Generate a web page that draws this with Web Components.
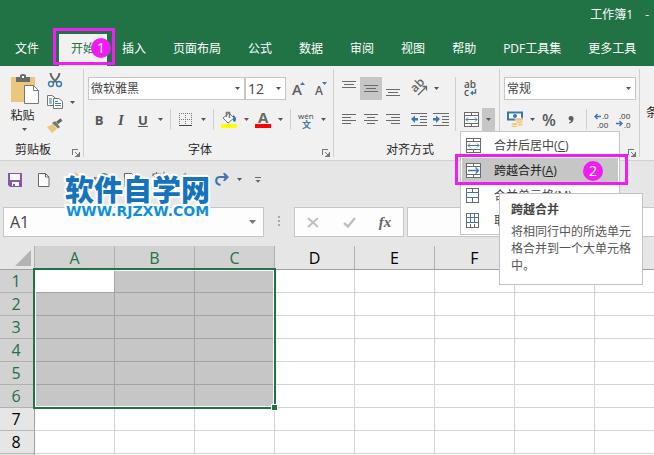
<!DOCTYPE html>
<html lang="zh-CN">
<head>
<meta charset="utf-8">
<title>工作簿1</title>
<style>
html,body{margin:0;height:100%}
body{overflow:hidden;background:#fff;font:12px/16px "Open Sans","Noto Sans CJK SC",sans-serif;color:#262626}
</style>
</head>
<body>
<excel-app></excel-app>
<script>
const line=(d,c='#6a6a6a')=>`<path d="${d}" fill="none" stroke="${c}" shape-rendering="crispEdges"/>`;
const frame='M.5 .5H14.5V14.5H.5ZM.5 3.5H14.5M.5 11.5H14.5';
const ICONS={
 arrow:[5,3,'<path d="M0 0H5L2.5 3Z" fill="#555"/>'],
 bigarrow:[7,4,'<path d="M0 0H7L3.5 4Z" fill="#777"/>'],
 launcher:[8,8,line('M.5 6V.5H6M3 3.5h1M7.5 3V7.5H3','#777')+'<path d="M3 3L6.5 6.5" stroke="#777"/><path d="M7 4V7H4Z" fill="#777"/>'],
 paste:[29,30,'<path d="M0 3H24V28H0Z" fill="#edc67d"/><path d="M5 3H9V1Q12 -1 15 1V3H19V8H5Z" fill="#6b6b6b"/><rect x="11" y="2" width="2" height="2" fill="#fff"/><path d="M13.500 11.500H22.500L27.500 16.500V29.500H13.500Z" fill="#fff" stroke="#777"/><path d="M22.500 11.500V16.500H27.500" fill="none" stroke="#777"/>'],
 cut:[16,16,'<path d="M3.500 1Q4 6 10 10.500M12.500 1Q12 6 6 10.500" fill="none" stroke="#666" stroke-width="2"/><circle cx="4" cy="12" r="2.500" fill="none" stroke="#3a78b5" stroke-width="1.400"/><circle cx="12" cy="12" r="2.500" fill="none" stroke="#3a78b5" stroke-width="1.400"/>'],
 copy:[16,15,'<path d="M.5 .5H5L8.500 3V10.500H.5Z" fill="#fff" stroke="#777"/><path d="M2 4h3M2 6h3M2 8h3" stroke="#3a78b5"/><path d="M6.500 3.500H12L15.500 6.500V13.500H6.500Z" fill="#fff" stroke="#777"/><path d="M8 6.500h3M8 8.500h6M8 10.500h6" stroke="#3a78b5"/>'],
 brush:[16,15,'<path d="M0 9L6 6L10 11L5 15Z" fill="#edc67d"/><path d="M5 5L8 3L13 9L11 10.500Z" fill="#777"/><path d="M10 5L14.500 1.500" stroke="#666" stroke-width="3"/>'],
 grow:[15,15,'<text x="0" y="14" font-family="Open Sans" font-weight="600" font-size="15" fill="#5f5f5f">A</text><path d="M8 4L10.500 1L13 4Z" fill="#3a78b5"/>'],
 shrink:[13,15,'<text x="0" y="14" font-family="Open Sans" font-weight="600" font-size="12" fill="#5f5f5f">A</text><path d="M7 1H12L9.500 4Z" fill="#3a78b5"/>'],
 borders:[14,14,'<path d="M.5 0V12M6.500 0V12M12.500 0V12M0 .5H13M0 6.500H13" stroke="#777" stroke-dasharray="1 1" shape-rendering="crispEdges"/><path d="M0 12.500H13" stroke="#444" shape-rendering="crispEdges"/>'],
 fill:[16,17,'<path d="M2 7L8 2L13 7L7 12Z" fill="#fff" stroke="#777"/><path d="M5.500 6V1.500H8.500V7" fill="none" stroke="#777" stroke-width="1.500"/><path d="M12 4Q17 7 14 11L12 10Z" fill="#3a78b5"/><path d="M0 13H16V17H0Z" fill="#ff0"/>'],
 color:[16,17,'<text x="3" y="12" font-family="Open Sans" font-weight="700" font-size="15" fill="#686868">A</text><path d="M0 13H16V17H0Z" fill="red"/>'],
 wen:[16,18,'<text x="0" y="8" font-family="Open Sans" font-size="8" fill="#444">wén</text><text x="4" y="17" font-family="Noto Sans CJK SC" font-weight="700" font-size="9" fill="#3a78b5">文</text>'],
 top:[14,15,line('M0 .5H14M2 3.500H12M0 6.500H14')],
 middle:[14,8,line('M0 .5H14M2 3.500H12M0 6.500H14')],
 bottom:[14,15,line('M0 8.500H14M2 11.500H12M0 14.500H14')],
 left:[14,11,line('M0 .5H14M0 3.500H9M0 6.500H14M0 9.500H9')],
 center:[14,11,line('M0 .5H14M3 3.500H11M0 6.500H14M3 9.500H11')],
 right:[14,11,line('M0 .5H14M5 3.500H14M0 6.500H14M5 9.500H14')],
 outdent:[16,13,line('M0 .5H16M9 3.500H16M9 6.500H16M9 9.500H16M0 12.500H16')+'<path d="M0 6L4 2.500V5H7V7.500H4V10Z" fill="#3a78b5"/>'],
 indent:[16,13,line('M0 .5H16M9 3.500H16M9 6.500H16M9 9.500H16M0 12.500H16')+'<path d="M7 6L3 2.500V5H0V7.500H3V10Z" fill="#3a78b5"/>'],
 orient:[17,17,'<text transform="translate(4 13) rotate(-45)" font-family="Open Sans" font-weight="600" font-size="12" fill="#666">ab</text><path d="M7 15L15 7M11.500 6.500H15.500V10.500" fill="none" stroke="#666" stroke-width="1.300"/>'],
 wrap:[14,17,'<text x="0" y="8" font-family="Open Sans" font-weight="600" font-size="10" fill="#555">ab</text><text x="0" y="16" font-family="Open Sans" font-weight="600" font-size="10" fill="#555">c</text><path d="M11.500 9V13H8" fill="none" stroke="#3a78b5" stroke-width="1.500"/><path d="M6 13L9 10.500V15.500Z" fill="#3a78b5"/>'],
 merge:[15,15,'<path d="M.5 .5H14.5V14.5H.5Z" fill="#fff"/>'+line(frame+'M7.500 0V3M7.500 12V15')+'<path d="M2 7.500H13M4 5.500L2 7.500L4 9.500M11 5.500L13 7.500L11 9.500" fill="none" stroke="#3a78b5"/>'],
 across:[15,15,'<path d="M.5 .5H14.5V14.5H.5Z" fill="#fff"/>'+line(frame+'M7.500 0V3M7.500 12V15')+'<path d="M2 7.500H12M9.500 4.500L12.500 7.500L9.500 10.500" fill="none" stroke="#3a78b5" stroke-width="1.300"/>'],
 cells:[13,15,line('M.5 .5H12.5V14.5H.5ZM6.500 0V5M6.500 10V15')+line('M1 4.500H12M1 9.500H12','#3a78b5')],
 unmerge:[13,15,line('M.5 .5H12.5V14.5H.5ZM4.500 0V4M8.500 0V4M4.500 11V15M8.500 11V15')+line('M1 4.500H12M1 9.500H12M4.500 5V9M8.500 5V9','#3a78b5')],
 money:[17,17,'<path d="M1 1.500H15V8.500H1Z" fill="#fff" stroke="#3a78b5" stroke-width="2"/><circle cx="8" cy="5" r="2" fill="#3a78b5"/><g fill="#edc67d" stroke="#fff" stroke-width=".6"><ellipse cx="12" cy="13.500" rx="4" ry="1.800"/><ellipse cx="12" cy="11" rx="4" ry="1.800"/><ellipse cx="12" cy="8.500" rx="4" ry="1.800"/><ellipse cx="7.500" cy="15" rx="3.500" ry="1.600"/><ellipse cx="7.500" cy="13" rx="3.500" ry="1.600"/></g>'],
 comma:[6,8,'<path d="M3 0Q6 0 5.500 3.500Q5 7 1 7.500V6.500Q3 6 3 4.500Q.5 4.500 .5 2.300Q.5 0 3 0Z" fill="#5f5f5f"/>'],
 incdec:[16,16,'<path d="M1 4.500H7M3.500 2L1 4.500L3.500 7" fill="none" stroke="#3a78b5" stroke-width="1.400"/><g font-family="Open Sans" font-size="8" fill="#333"><text x="8" y="7">.0</text><text x="3" y="16">.00</text></g>'],
 decdec:[16,16,'<path d="M0 11.500H6M3.500 9L6 11.500L3.500 14" fill="none" stroke="#3a78b5" stroke-width="1.400"/><g font-family="Open Sans" font-size="8" fill="#333"><text x="3" y="7">.00</text><text x="8" y="16">.0</text></g>'],
 save:[14,14,'<path d="M0 0H14V14H2L0 12Z" fill="#8656ac"/><path d="M2 1H12V7H2ZM4 9H11V13H4Z" fill="#f7f7f7"/><path d="M5 11H7V13H5Z" fill="#8656ac"/>'],
 page:[12,14,'<path d="M.5 .5H7.500L11 4V13.500H.5Z" fill="#fff" stroke="#666"/><path d="M7.500 .5V4H11" fill="none" stroke="#666"/>'],
 open:[15,14,'<path d="M0 3H5L6 1.500H12V5H0ZM0 5H14V14H0Z" fill="#edc67d"/><path d="M10 0L14 3L10 6" fill="none" stroke="#edc67d" stroke-width="2"/>'],
 chart:[16,14,'<path d="M0 4H8V14H0Z" fill="#777"/><circle cx="10" cy="5" r="5" fill="#4c9d77"/><path d="M7 5L9 7L13 3" fill="none" stroke="#fff"/>'],
 preview:[13,14,'<path d="M.5 .5H7.500L11 4V13.500H.5Z" fill="#fff" stroke="#666"/><circle cx="8" cy="8" r="3" fill="#eee" stroke="#666"/>'],
 spell:[15,16,'<path d="M1 4V2H8V4M4.500 0V2M2.500 4.500H7L4.500 7V11M1 7.500H8M9 10L12 1L15 10M10 7H14" fill="none" stroke="#666" stroke-width="1.200"/>'],
 undo:[15,13,'<path d="M5 0L1 4L5 8M1 4H9Q13 4 13 8Q13 11 9 12" fill="none" stroke="#aaa" stroke-width="2"/>'],
 redo:[15,13,'<path d="M10 4H5Q1.200 4 1.200 8Q1.200 11 5.500 12" fill="none" stroke="#3f77b3" stroke-width="2.200"/><path d="M8 0H10L14 4L10 8H8L10 4Z" fill="#3f77b3"/>'],
 more:[7,6,line('M0 .5H6')+'<path d="M.5 3H5.500L3 5.800Z" fill="#666"/>'],
 cancel:[12,11,'<path d="M1 1L11 10M11 1L1 10" stroke="#c0c0c0" stroke-width="2"/>'],
 ok:[13,11,'<path d="M1 6L5 9.500L12 1" fill="none" stroke="#c0c0c0" stroke-width="2.400"/>'],
 dots:[2,11,'<path d="M0 0H2V2H0ZM0 4H2V6H0ZM0 8H2V10H0Z" fill="#a9a9a9"/>'],
 corner:[16,16,'<path d="M16 0V16H0Z" fill="#b3b3b3"/>']
};
const define=(name,html)=>customElements.define(name,class extends HTMLElement{
 constructor(){super();this.attachShadow({mode:'open'})}
 connectedCallback(){
  this.shadowRoot.innerHTML=typeof html==='function'?html(this):html;
 }
});

define('ui-icon',el=>{
 const [w,h,body]=ICONS[el.getAttribute('name')];
 return `<style>:host{display:block;flex:none;line-height:0}svg{display:block;overflow:visible}</style><svg width="${w}" height="${h}" viewBox="0 0 ${w} ${h}" aria-hidden="true">${body}</svg>`;
});

define('tool-button',el=>`<style>
:host{display:flex;flex:none;width:22px;height:23px}
:host([drop]){width:12px}
:host([pressed]){background:#c6c6c6}
button{flex:1;display:flex;align-items:center;justify-content:center;padding:0;border:0;background:none;color:#555;font:inherit;min-width:0}
</style><button type="button" aria-label="${el.getAttribute('label')||'选项'}">${el.hasAttribute('drop')?'<ui-icon name="arrow"></ui-icon>':el.hasAttribute('icon')?`<ui-icon name="${el.getAttribute('icon')}"></ui-icon>`:'<slot></slot>'}</button>`);

define('combo-box',el=>`<style>
:host{display:grid;grid-template:1fr / 1fr;box-sizing:border-box;height:23px;border:1px solid #c6c6c6;background:#fff}
select{grid-area:1/1;appearance:none;min-width:0;border:0;margin:0;padding:0 12px 0 2px;background:none;color:#444;font:inherit;font-size:var(--combo-size,12px)}
ui-icon{grid-area:1/1;justify-self:end;align-self:center;margin-right:4px;pointer-events:none}
</style><select aria-label="${el.getAttribute('label')}"><option>${el.getAttribute('value')}</option></select><ui-icon name="arrow"></ui-icon>`);

define('v-sep',`<style>:host{display:block;flex:none;width:1px;height:21px;margin:0 4px;background:#d0d0d0}</style>`);

define('call-out',`<style>
:host{position:absolute;z-index:5;box-sizing:border-box;border:3px solid #f01cf3;pointer-events:none}
</style>`);
define('step-badge',`<style>
:host{position:absolute;z-index:6;display:grid;place-items:center;width:20px;height:20px;border-radius:50%;background:#f01cf3;color:#fff;font-size:14px;line-height:20px}
</style><slot></slot>`);

define('title-bar',`<style>
:host{display:flex;justify-content:flex-end;box-sizing:border-box;height:34px;padding:7px 5px 0 0;background:#217346;color:#fff}
div{display:flex;gap:12px}
</style><div><span>工作簿1</span><span>-</span></div>`);

define('tab-strip',`<style>
:host{display:block;background:#217346;color:#fff}
nav{display:flex;gap:3px;height:32px;padding-left:3px}
a{position:relative;flex:none;display:flex;align-items:center;padding:0 12px 3px;color:inherit;text-decoration:none;white-space:nowrap}
a.on{margin-left:5px;background:#f1f1f1;color:#217346}
call-out{left:-6px;right:-8px;top:-6px;bottom:1px}
step-badge{left:32px;top:4px}
</style><nav><a href="#file">文件</a><a class="on" href="#home" aria-current="page">开始<call-out></call-out><step-badge>1</step-badge></a><a href="#insert">插入</a><a href="#layout">页面布局</a><a href="#formula">公式</a><a href="#data">数据</a><a href="#review">审阅</a><a href="#view">视图</a><a href="#help">帮助</a><a href="#pdf">PDF工具集</a><a href="#more">更多工具</a></nav>`);

define('ribbon-group',el=>`<style>
:host{display:flex;flex-direction:column;flex:none;position:relative;height:94px;box-sizing:border-box;padding:0 4px;border-right:1px solid transparent;border-image:linear-gradient(#f1f1f1 4px,#d0d0d0 4px 90px,#f1f1f1 90px) 1}
.body{flex:1;display:flex;padding-top:var(--body-top,11px)}
footer{display:flex;align-items:center;height:20px;flex:none}
span{flex:1;text-align:center}
button{display:flex;padding:6px 0 0;border:0;background:none;margin:0 -1px 0 6px}
</style><div class="body"><slot></slot></div><footer><span>${el.getAttribute('label')||''}</span><button type="button" aria-label="更多设置"><ui-icon name="launcher"></ui-icon></button></footer>`);

define('tool-tip',`<style>
:host{position:absolute;z-index:4;box-sizing:border-box;width:144px;padding:7px 11px 10px;border:1px solid #c0c0c0;background:#fff;color:#555;font-size:12px;line-height:17px}
strong{display:block;font-weight:600;margin-bottom:5px;color:#444}
p{margin:0}
</style><strong>跨越合并</strong><p>将相同行中的所选单元格合并到一个大单元格中。</p>`);

define('merge-menu',`<style>
:host{position:absolute;z-index:3;box-sizing:border-box;width:160px;padding:1px;border:1px solid #c6c6c6;background:#fff}
.item{position:relative}
button{display:grid;grid-template-columns:24px 1fr;align-items:center;justify-items:start;width:100%;height:25px;padding:0 0 0 4px;border:0;background:none;color:#444;font:inherit;text-align:left;white-space:nowrap}
button span{padding-left:4px}
.on button{background:#c6c6c6;color:#222}
call-out{left:-7px;right:-10px;top:-4px;bottom:-2px}
step-badge{left:121px;top:3px}
tool-tip{left:37px;top:35px}
</style>
<div class="item"><button type="button"><ui-icon name="merge"></ui-icon><span>合并后居中(<u>C</u>)</span></button></div>
<div class="item on"><button type="button"><ui-icon name="across"></ui-icon><span>跨越合并(<u>A</u>)</span></button><call-out></call-out><step-badge>2</step-badge><tool-tip></tool-tip></div>
<div class="item"><button type="button"><ui-icon name="cells"></ui-icon><span>合并单元格(<u>M</u>)</span></button></div>
<div class="item"><button type="button"><ui-icon name="unmerge"></ui-icon><span>取消单元格合并(<u>U</u>)</span></button></div>`);

define('ribbon-bar',`<style>
:host{display:flex;position:relative;z-index:2;background:#f1f1f1;border-bottom:1px solid #d0d0d0}
.col{display:flex;flex-direction:column;gap:8px;flex:1}
.row{display:flex;align-items:center;height:23px}
.clip{--body-top:2px;width:84px;padding-left:0}
.paste{display:flex;flex-direction:column;align-items:center;gap:4px;width:32px;margin:0 4px 0 8px;padding:6px 0 0;border:0;background:none;color:inherit;font:inherit}
.paste ui-icon:first-child{margin-left:3px}
.paste span{margin-left:-3px}
.font{width:250px;padding:0 4px 0 0}
.font .col{padding-left:4px;margin-right:-3px}
.font .name{flex:1}
.font .size{width:41px;margin-right:2px;--combo-size:14px}
.align{width:166px}
.num{width:140px}
.gap{margin-left:4px}
.long{height:54px;margin:0 4px 0 3px}
.merge{position:relative}
.merge [drop]{width:13px}
.right{flex:none}
.num combo-box{margin-right:-1px}
merge-menu{left:0;top:100%}
.cond{padding:39px 0 0 6px;flex:1 0 0;min-width:0;overflow:hidden;white-space:nowrap;border:0;background:none;color:inherit;font:inherit;text-align:left;align-self:flex-start}
b,i,u{font-size:13px;font-weight:700}
i{font-family:"Liberation Serif",serif;font-size:15px}
.pct{font-size:16px;font-weight:600}
</style>
<ribbon-group class="clip" label="剪贴板">
 <button type="button" class="paste"><ui-icon name="paste"></ui-icon><span>粘贴</span><ui-icon name="arrow"></ui-icon></button>
 <div><div class="row"><tool-button icon="cut" label="剪切"></tool-button></div><div class="row"><tool-button icon="copy" label="复制"></tool-button><tool-button drop></tool-button></div><div class="row"><tool-button icon="brush" label="格式刷"></tool-button></div></div>
</ribbon-group>
<ribbon-group class="font" label="字体"><div class="col">
 <div class="row"><combo-box class="name" label="字体" value="微软雅黑"></combo-box><combo-box class="size" label="字号" value="12"></combo-box><tool-button icon="grow" label="增大字号"></tool-button><tool-button icon="shrink" label="减小字号"></tool-button></div>
 <div class="row"><tool-button label="加粗"><b>B</b></tool-button><tool-button label="倾斜"><i>I</i></tool-button><tool-button label="下划线"><u>U</u></tool-button><tool-button drop></tool-button><v-sep></v-sep><tool-button icon="borders" label="边框"></tool-button><tool-button drop></tool-button><v-sep></v-sep><tool-button icon="fill" label="填充颜色"></tool-button><tool-button drop></tool-button><tool-button icon="color" label="字体颜色"></tool-button><tool-button drop></tool-button><v-sep></v-sep><tool-button icon="wen" label="拼音"></tool-button><tool-button drop></tool-button></div>
</div></ribbon-group>
<ribbon-group class="align" label="对齐方式"><div class="col">
 <div class="row"><tool-button icon="top" label="顶端对齐"></tool-button><tool-button pressed icon="middle" label="垂直居中"></tool-button><tool-button icon="bottom" label="底端对齐"></tool-button><tool-button class="gap" icon="orient" label="方向"></tool-button><tool-button drop></tool-button></div>
 <div class="row"><tool-button icon="left" label="左对齐"></tool-button><tool-button icon="center" label="居中"></tool-button><tool-button icon="right" label="右对齐"></tool-button><tool-button class="gap" icon="outdent" label="减少缩进"></tool-button><tool-button icon="indent" label="增加缩进"></tool-button></div>
</div><v-sep class="long"></v-sep><div class="col right">
 <div class="row"><tool-button icon="wrap" label="自动换行"></tool-button></div>
 <div class="row merge"><tool-button icon="merge" label="合并后居中"></tool-button><tool-button drop pressed></tool-button><merge-menu></merge-menu></div>
</div></ribbon-group>
<ribbon-group class="num"><div class="col">
 <combo-box label="数字格式" value="常规"></combo-box>
 <div class="row"><tool-button icon="money" label="会计格式"></tool-button><tool-button drop></tool-button><tool-button label="百分比"><span class="pct">%</span></tool-button><tool-button icon="comma" label="千位分隔"></tool-button><v-sep></v-sep><tool-button icon="incdec" label="增加小数位"></tool-button><tool-button icon="decdec" label="减少小数位"></tool-button></div>
</div></ribbon-group>
<button type="button" class="cond">条</button>`);

define('site-mark',`<style>
:host{position:absolute;z-index:3;display:flex;flex-direction:column;align-items:center;white-space:nowrap;color:#1573be;text-shadow:-2px 0 #fff,2px 0 #fff,0 -2px #fff,0 2px #fff,-1px -1px #fff,1px -1px #fff,-1px 1px #fff,1px 1px #fff,-2px -2px 1px #fff,2px 2px 1px #fff}
b{font:900 29px/32px "Noto Sans CJK SC",sans-serif}
span{font:700 14px/14px "DejaVu Sans",sans-serif;color:#0e8fdc}
</style><b>软件自学网</b><span>WWW.RJZXW.COM</span>`);

define('quick-bar',`<style>
:host{display:flex;position:relative;height:39px;padding-top:7px;background:#e6e6e6}
tool-button{width:29px}
.redo{margin-left:5px}
tool-button[drop]{width:12px;margin-left:-4px}
.more{width:26px}
site-mark{left:65px;top:11px}
</style><tool-button icon="save" label="保存"></tool-button><tool-button icon="page" label="新建"></tool-button><tool-button icon="open" label="打开"></tool-button><tool-button icon="chart" label="检查"></tool-button><tool-button icon="preview" label="预览"></tool-button><tool-button icon="spell" label="拼写检查"></tool-button><tool-button icon="undo" label="撤消"></tool-button><tool-button class="redo" icon="redo" label="恢复"></tool-button><tool-button drop></tool-button><tool-button class="more" icon="more" label="自定义"></tool-button><site-mark></site-mark>`);

define('formula-bar',`<style>
:host{display:flex;height:30px;padding:0 0 9px 3px;background:#e6e6e6}
div,.f{box-sizing:border-box;display:flex;align-items:center;height:30px;border:1px solid #c6c6c6;background:#fdfdfd}
.name{flex:none;width:261px;padding-right:7px}
input{min-width:0;flex:1;border:0;padding:0 6px;background:none;color:#444;font:inherit;font-size:16px}
.dots{margin:9px 14px 0 14px}
.acts{flex:none;width:110px;margin-right:3px}
.acts tool-button{flex:1}
.f{border-right:0;flex:1}
i{font:italic 700 15px/20px "Liberation Serif",serif;color:#666}
</style><div class="name"><input aria-label="名称框" value="A1"><ui-icon name="bigarrow"></ui-icon></div><ui-icon class="dots" name="dots"></ui-icon><div class="acts"><tool-button icon="cancel" label="取消"></tool-button><tool-button icon="ok" label="输入"></tool-button><tool-button label="插入函数"><i>fx</i></tool-button></div><input class="f" aria-label="编辑栏">`);

define('sheet-grid',()=>{
 const cols='ABCDEFGH'.split('');
 const rows=[1,2,3,4,5,6,7,8];
 return `<style>
:host{display:block;position:relative;flex:1;overflow:hidden;background:linear-gradient(90deg,#e6e6e6 34px,#a0a0a0 34px 35px,#fff 35px)}
table{border-collapse:separate;border-spacing:0;table-layout:fixed;width:675px;font-size:16px;line-height:22px;color:#000}
th,td{box-sizing:border-box;height:23px;padding:0;border:solid #d4d4d4;border-width:0 1px 1px 0;font-weight:400;text-align:center}
thead th{height:24px;background:#e6e6e6;border-right-color:#b1b1b1;border-bottom-color:#a0a0a0}
tbody th{background:#e6e6e6;border-right-color:#a0a0a0;border-bottom-color:#b8b8b8;padding-right:2px}
th.on{background:#d2d2d2;color:#217346;border-color:#b1b1b1}
td.on{background:#c6c6c6;border-color:#a3a3a3}
td.first{background:#fff}
.corner{padding:0 3px 3px 0;border-right-color:#b1b1b1}
.corner ui-icon{float:right;margin-top:4px}
.range{position:absolute;left:33px;top:22px;box-sizing:border-box;width:243px;height:141px;border:2px solid #217346;box-shadow:inset 0 0 0 1px #fff}
.range::after{content:"";position:absolute;right:-4px;bottom:-4px;width:5px;height:5px;background:#217346;border:1px solid #fff}
</style><table><colgroup><col style="width:35px">${cols.map(()=>'<col>').join('')}</colgroup><thead><tr><th class="corner" aria-label="全选"><ui-icon name="corner"></ui-icon></th>${cols.map((c,i)=>`<th scope="col" class="${i<3?'on':''}">${c}</th>`).join('')}</tr></thead><tbody>${rows.map(r=>`<tr><th scope="row" class="${r<7?'on':''}">${r}</th>${cols.map((c,i)=>`<td class="${r<7&&i<3?'on':''}${r===1&&i===0?' first':''}"></td>`).join('')}</tr>`).join('')}</tbody></table><div class="range"></div>`;
});

define('excel-app',`<style>
:host{display:flex;flex-direction:column;min-height:100%}
</style><title-bar></title-bar><tab-strip></tab-strip><ribbon-bar></ribbon-bar><quick-bar></quick-bar><formula-bar></formula-bar><sheet-grid></sheet-grid>`);
</script>
</body>
</html>
